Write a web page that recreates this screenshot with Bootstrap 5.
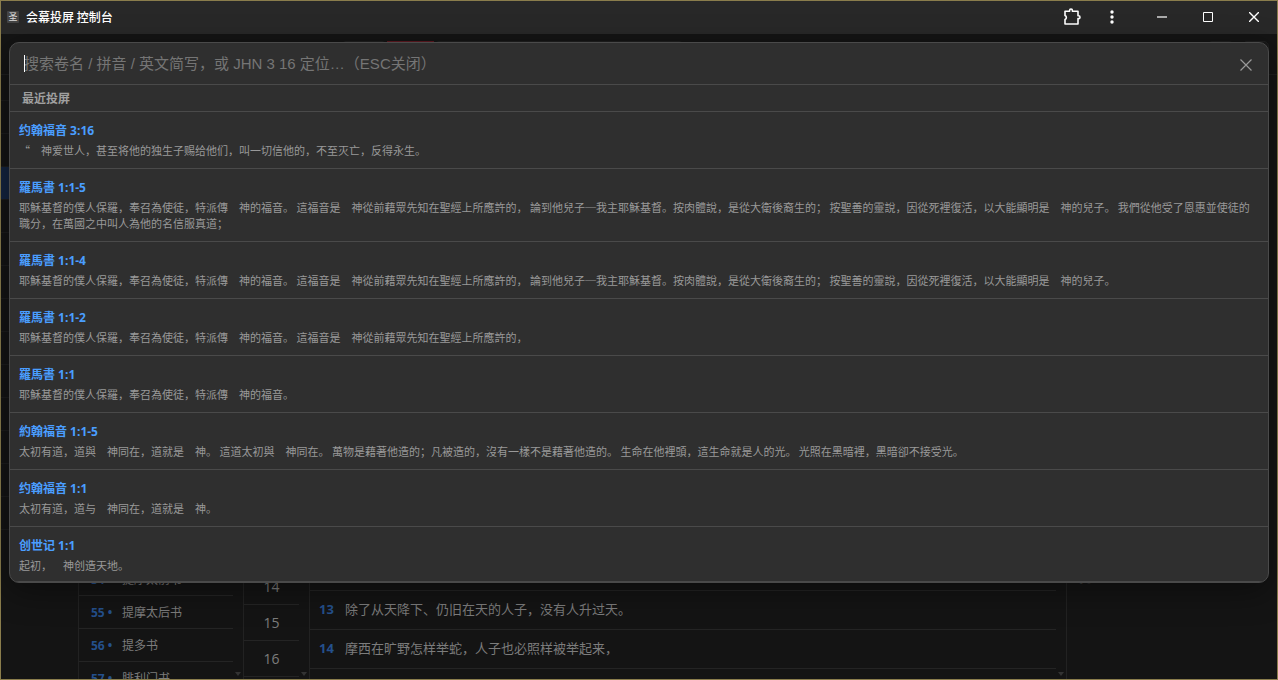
<!DOCTYPE html>
<html lang="zh-CN" data-bs-theme="dark">
<head>
<meta charset="utf-8">
<meta name="viewport" content="width=device-width, initial-scale=1">
<title>会幕投屏 控制台</title>
<link href="https://cdn.jsdelivr.net/npm/bootstrap@5.3.0/dist/css/bootstrap.min.css" rel="stylesheet">
<style>
body{font-family:"Open Sans","Noto Sans CJK SC",sans-serif;background:#141414;text-spacing-trim:space-all;color:#999}
.app-window{height:100vh;border:1px solid #8a7d4c}
.titlebar{height:33px;background:#282828;color:#fff;font:12px/16px "Noto Sans CJK SC",sans-serif;padding:0 0 1px 6px}
.titlebar .caption{font-weight:500}
.app-icon{width:12px;height:12px;background:#444;font-size:9px;line-height:12px;color:#ddd;border-radius:1px;margin-right:7px}
.win-btn{width:46px;height:32px;padding:0;border:0;background:none;color:#fff;display:flex;align-items:center;justify-content:center}
.win-btn.slim{width:40px}
.win-btn.first{margin-left:7px}
.stage{min-height:0}
.toolbar{height:41px;border-bottom:1px solid #1e1e1e;padding:7px 0 0 340px}
.tool{height:26px;width:46px;border:1px solid #1f1f1f;border-radius:5px;background:#181818}
.tool.live{width:47px;border-color:#5c1820;border-radius:0}
.tool.wide{width:250px}
.tool.short{width:27px}
.col-head{height:26px;border-bottom:1px solid #1c1c1c}
.rail{width:77px}
.rail-row{height:33px;border-bottom:1px solid #1c1c1c}
.rail-row.on{background:#14243f}
.pane{border-left:1px solid #222;overflow:hidden;position:relative}
.pane ul{margin:0;padding:0;list-style:none}
.pane li{border-bottom:1px solid #242424;display:flex;align-items:center;white-space:nowrap}
.books{width:165px}
.books ul{padding:488px 10px 0 0}
.books li{height:33px;padding:2px 0 0 12px;font-size:12px;color:#7c7c7c}
.num{color:#24508c;font-weight:700}
.books .num{width:31px}
.chapters{width:66px}
.chapters ul{padding:494px 10px 0 0}
.chapters li{height:36px;justify-content:center;font-size:14px;color:#7c7c7c}
.verses ul{padding:515px 10px 0 0}
.verses li{height:39px;padding-left:9px;font-size:13px;color:#7c7c7c}
.verses li:first-child{border-top:1px solid #242424;height:40px}
.verses .num{width:26px;font-size:13px}
.preview{width:211px}
.preview p{margin:0;padding:495px 0 0 10px;font-size:10px;line-height:18px;color:#3a3a3a}
.scroll-end{position:absolute;right:2px;bottom:3px;border:3px solid transparent;border-top:4px solid #333;border-bottom:0}
.palette{position:absolute;top:42px;left:9px;right:9px;background:#2f2f2f;border:1px solid #4a4a4a;border-radius:10px;box-shadow:0 8px 32px rgba(0,0,0,.4);overflow:hidden}
.search-row{height:42px;border-bottom:1px solid #4a4a4a;padding:0 9px 0 14px}
.text-caret{width:1px;height:17px;margin-right:-1px;background:#fff;z-index:1}
.search-row input{background:none;border:0;outline:0;padding:0;color:#fff;caret-color:transparent;font:15px/24px "Liberation Sans","Noto Sans CJK SC",sans-serif}
.search-row input::placeholder{color:#757575;opacity:1}
.close-btn{width:26px;height:26px;padding:0;border:0;background:none;color:#999;display:flex;align-items:center;justify-content:center;margin-top:3px}
.section-label{height:27px;margin:0;border-bottom:1px solid #4a4a4a;padding-left:12px;font-size:12px;line-height:28px;font-weight:700;color:#a0a0a0}
.hit{display:block;padding:9px 9px 10px;border-bottom:1px solid #4a4a4a;text-decoration:none}
.hit:last-child{padding-bottom:8px}
.hit strong{display:block;font-size:12px;line-height:20px;font-weight:700;color:#4a9eff;margin-bottom:1px}
.hit span{display:block;font:11px/16px "Noto Sans CJK SC",sans-serif;color:#999}
</style>
</head>
<body>
<div class="app-window d-flex flex-column overflow-hidden position-relative">
<header class="titlebar d-flex align-items-center flex-shrink-0">
<span class="app-icon text-center">圣</span><span class="caption">会幕投屏 控制台</span>
<div class="d-flex ms-auto">
<button class="win-btn slim" aria-label="扩展程序"><svg width="18" height="18" viewBox="0 0 18 18" fill="none" stroke="currentColor" stroke-width="1.6"><path d="M2 3.200h4.600V2.400a1.200 1.200 0 0 1 2.800 0v.8H15v4.600h.6a1.400 1.400 0 0 1 0 2.800H15V16H2v-4.400a2.300 2.300 0 0 0 0-4.200z" stroke-linejoin="round"/></svg></button>
<button class="win-btn slim" aria-label="菜单"><svg width="16" height="16" fill="currentColor"><circle cx="8" cy="3" r="1.700"/><circle cx="8" cy="8" r="1.700"/><circle cx="8" cy="13" r="1.700"/></svg></button>
<button class="win-btn first" aria-label="最小化"><svg width="10" height="10"><path d="M0 5h10" stroke="#aaa" stroke-width="2"/></svg></button>
<button class="win-btn" aria-label="最大化"><svg width="10" height="10"><path d="M.5.5h9v9h-9z" fill="none" stroke="currentColor"/></svg></button>
<button class="win-btn" aria-label="关闭窗口"><svg width="10" height="10"><path d="M0 0l10 10M10 0L0 10" stroke="currentColor" stroke-width="1.400"/></svg></button>
</div>
</header>
<main class="stage d-flex flex-column flex-grow-1">
<div class="toolbar d-flex flex-shrink-0"><div class="tool"></div><div class="tool live"></div><div class="tool wide"></div><div class="tool short ms-auto me-2"></div><div class="tool short me-2"></div></div>
<div class="d-flex flex-grow-1 stage">
<nav class="rail flex-shrink-0"><div class="col-head"></div><div class="rail-row"></div><div class="rail-row"></div><div class="rail-row on"></div><div class="rail-row"></div><div class="rail-row"></div><div class="rail-row"></div><div class="rail-row"></div><div class="rail-row"></div><div class="rail-row"></div><div class="rail-row"></div><div class="rail-row"></div><div class="rail-row"></div><div class="rail-row"></div></nav>
<section class="pane books flex-shrink-0"><ul><li><span class="num">54 •</span>提摩太前书</li><li><span class="num">55 •</span>提摩太后书</li><li><span class="num">56 •</span>提多书</li><li><span class="num">57 •</span>腓利门书</li></ul><i class="scroll-end"></i></section>
<section class="pane chapters flex-shrink-0"><ul><li>14</li><li>15</li><li>16</li></ul><i class="scroll-end"></i></section>
<section class="pane verses flex-grow-1"><ul><li><span class="num">13</span>除了从天降下、仍旧在天的人子，没有人升过天。</li><li><span class="num">14</span>摩西在旷野怎样举蛇，人子也必照样被举起来，</li></ul><i class="scroll-end"></i></section>
<section class="pane preview flex-shrink-0"><p>示。</p></section>
</div>
</main>
</div>
<div class="palette" role="dialog" aria-label="搜索">
<div class="search-row d-flex align-items-center"><span class="text-caret"></span><input class="flex-grow-1" type="text" autofocus aria-label="搜索经文" placeholder="搜索卷名 / 拼音 / 英文简写，或 JHN 3 16 定位…（ESC关闭）"><button class="close-btn" aria-label="关闭"><svg width="12" height="12"><path d="M.5.5l11 11M11.500.5l-11 11" stroke="currentColor" stroke-width="1.200"/></svg></button></div>
<h2 class="section-label">最近投屏</h2>
<a class="hit" href="#"><strong>约翰福音 3:16</strong><span>“　神爱世人，甚至将他的独生子赐给他们，叫一切信他的，不至灭亡，反得永生。</span></a>
<a class="hit" href="#"><strong>羅馬書 1:1-5</strong><span>耶穌基督的僕人保羅，奉召為使徒，特派傳　神的福音。 這福音是　神從前藉眾先知在聖經上所應許的， 論到他兒子─我主耶穌基督。按肉體說，是從大衛後裔生的； 按聖善的靈說，因從死裡復活，以大能顯明是　神的兒子。 我們從他受了恩惠並使徒的職分，在萬國之中叫人為他的名信服真道；</span></a>
<a class="hit" href="#"><strong>羅馬書 1:1-4</strong><span>耶穌基督的僕人保羅，奉召為使徒，特派傳　神的福音。 這福音是　神從前藉眾先知在聖經上所應許的， 論到他兒子─我主耶穌基督。按肉體說，是從大衛後裔生的； 按聖善的靈說，因從死裡復活，以大能顯明是　神的兒子。</span></a>
<a class="hit" href="#"><strong>羅馬書 1:1-2</strong><span>耶穌基督的僕人保羅，奉召為使徒，特派傳　神的福音。 這福音是　神從前藉眾先知在聖經上所應許的，</span></a>
<a class="hit" href="#"><strong>羅馬書 1:1</strong><span>耶穌基督的僕人保羅，奉召為使徒，特派傳　神的福音。</span></a>
<a class="hit" href="#"><strong>約翰福音 1:1-5</strong><span>太初有道，道與　神同在，道就是　神。 這道太初與　神同在。 萬物是藉著他造的；凡被造的，沒有一樣不是藉著他造的。 生命在他裡頭，這生命就是人的光。 光照在黑暗裡，黑暗卻不接受光。</span></a>
<a class="hit" href="#"><strong>约翰福音 1:1</strong><span>太初有道，道与　神同在，道就是　神。</span></a>
<a class="hit" href="#"><strong>创世记 1:1</strong><span>起初，　神创造天地。</span></a>
</div>
<script src="https://cdn.jsdelivr.net/npm/bootstrap@5.3.0/dist/js/bootstrap.bundle.min.js"></script>
</body>
</html>
